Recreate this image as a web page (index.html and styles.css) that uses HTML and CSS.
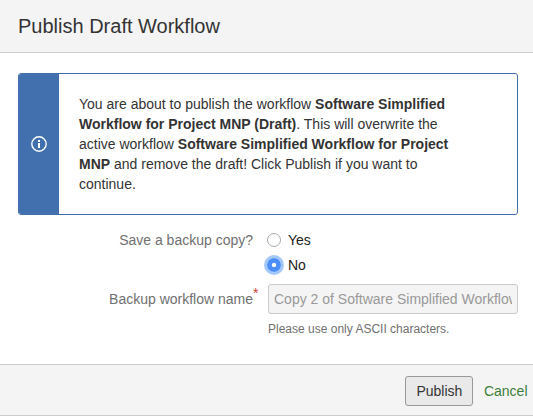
FILE: index.html
```html
<!DOCTYPE html>
<html lang="en">
<head>
<meta charset="utf-8">
<title>Publish Draft Workflow</title>
<link rel="stylesheet" href="styles.css">
</head>
<body>
<main class="dialog">
  <header class="dialog-header"><h1>Publish Draft Workflow</h1></header>
  <section class="dialog-body">
    <div class="message">
      <div class="message-side">
        <svg width="16" height="16" viewBox="0 0 16 16" fill="none" stroke="#fff"><circle cx="8" cy="8" r="7.2" stroke-width="1.4"/><path d="M8 4v2M8 7v5" stroke-width="2"/></svg>
      </div>
      <p class="message-text">
        <span>You are about to publish the workflow <b>Software Simplified</b></span>
        <span><b>Workflow for Project MNP (Draft)</b>. This will overwrite the</span>
        <span>active workflow <b>Software Simplified Workflow for Project</b></span>
        <span><b>MNP</b> and remove the draft! Click Publish if you want to</span>
        <span>continue.</span>
      </p>
    </div>
    <form class="form">
      <span class="label">Save a backup copy?</span>
      <div class="choices">
        <label class="choice"><i class="radio"></i>Yes</label>
        <label class="choice"><i class="radio checked"></i>No</label>
      </div>
      <span class="label name-label">Backup workflow name<span class="required">*</span></span>
      <div class="field">
        <div class="input"><div class="value">Copy 2 of Software Simplified Workflow</div></div>
        <div class="hint">Please use only ASCII characters.</div>
      </div>
    </form>
  </section>
  <footer class="dialog-footer">
    <button class="publish">Publish</button>
    <a class="cancel">Cancel</a>
  </footer>
</main>
</body>
</html>
```
FILE: styles.css
```css
* { box-sizing: border-box; }
body { margin: 0; background: #fff; color: #333; font: 14px/20px "Liberation Sans", Arial, sans-serif; overflow: hidden; }
.dialog { display: flex; flex-direction: column; height: 416px; }
.dialog-header { height: 53px; padding: 12px 18px; background: #f4f4f4; border-bottom: 1px solid #ccc; }
h1 { margin: 0; font-size: 20px; line-height: 29px; font-weight: 400; white-space: nowrap; }
.dialog-body { flex: 1; padding: 20px 15px 0 18px; }
.message { display: flex; height: 142px; border: 1px solid #4270af; border-radius: 3px; overflow: hidden; }
.message-side { width: 40px; background: #4270af; display: flex; align-items: center; justify-content: center; }
.message-text { margin: 0; padding: 20px; display: flex; flex-direction: column; align-items: flex-start; white-space: nowrap; color: #333; }
.form { display: grid; grid-template-columns: 235px 250px; column-gap: 15px; margin-top: 15px; }
.label { text-align: right; color: #707070; white-space: nowrap; }
.choices { display: grid; gap: 5px; margin-left: -1px; color: #222; }
.choice { display: flex; align-items: center; gap: 7px; }
.radio { width: 14px; height: 14px; border: 1px solid #aaa; border-radius: 50%; }
.checked { border: 0; background: radial-gradient(circle, #fff 0 1.7px, #4c8ffb 2.6px); box-shadow: 0 0 0 3px #a5c8fb; }
.name-label { margin-top: 14px; position: relative; }
.field { margin-top: 9px; }
.required { position: absolute; left: 100%; top: -6px; color: #d04437; }
.input { height: 30px; border: 1px solid #ccc; border-radius: 3px; background: #f4f4f4; padding: 4px 5px; color: #999; }
.value { white-space: nowrap; overflow: hidden; }
.hint { margin-top: 5px; font-size: 12px; color: #707070; }
.dialog-footer { height: 52px; border: solid #ccc; border-width: 1px 0; background: #f4f4f4; display: flex; align-items: center; justify-content: flex-end; padding: 1px 5.5px 0 0; gap: 10.5px; }
.publish { width: 68px; height: 30px; font: inherit; color: #333; border: 1px solid #999; border-radius: 3px; background: #e9e9e9; padding: 0; }
.cancel { color: #3b7f3b; }
```
